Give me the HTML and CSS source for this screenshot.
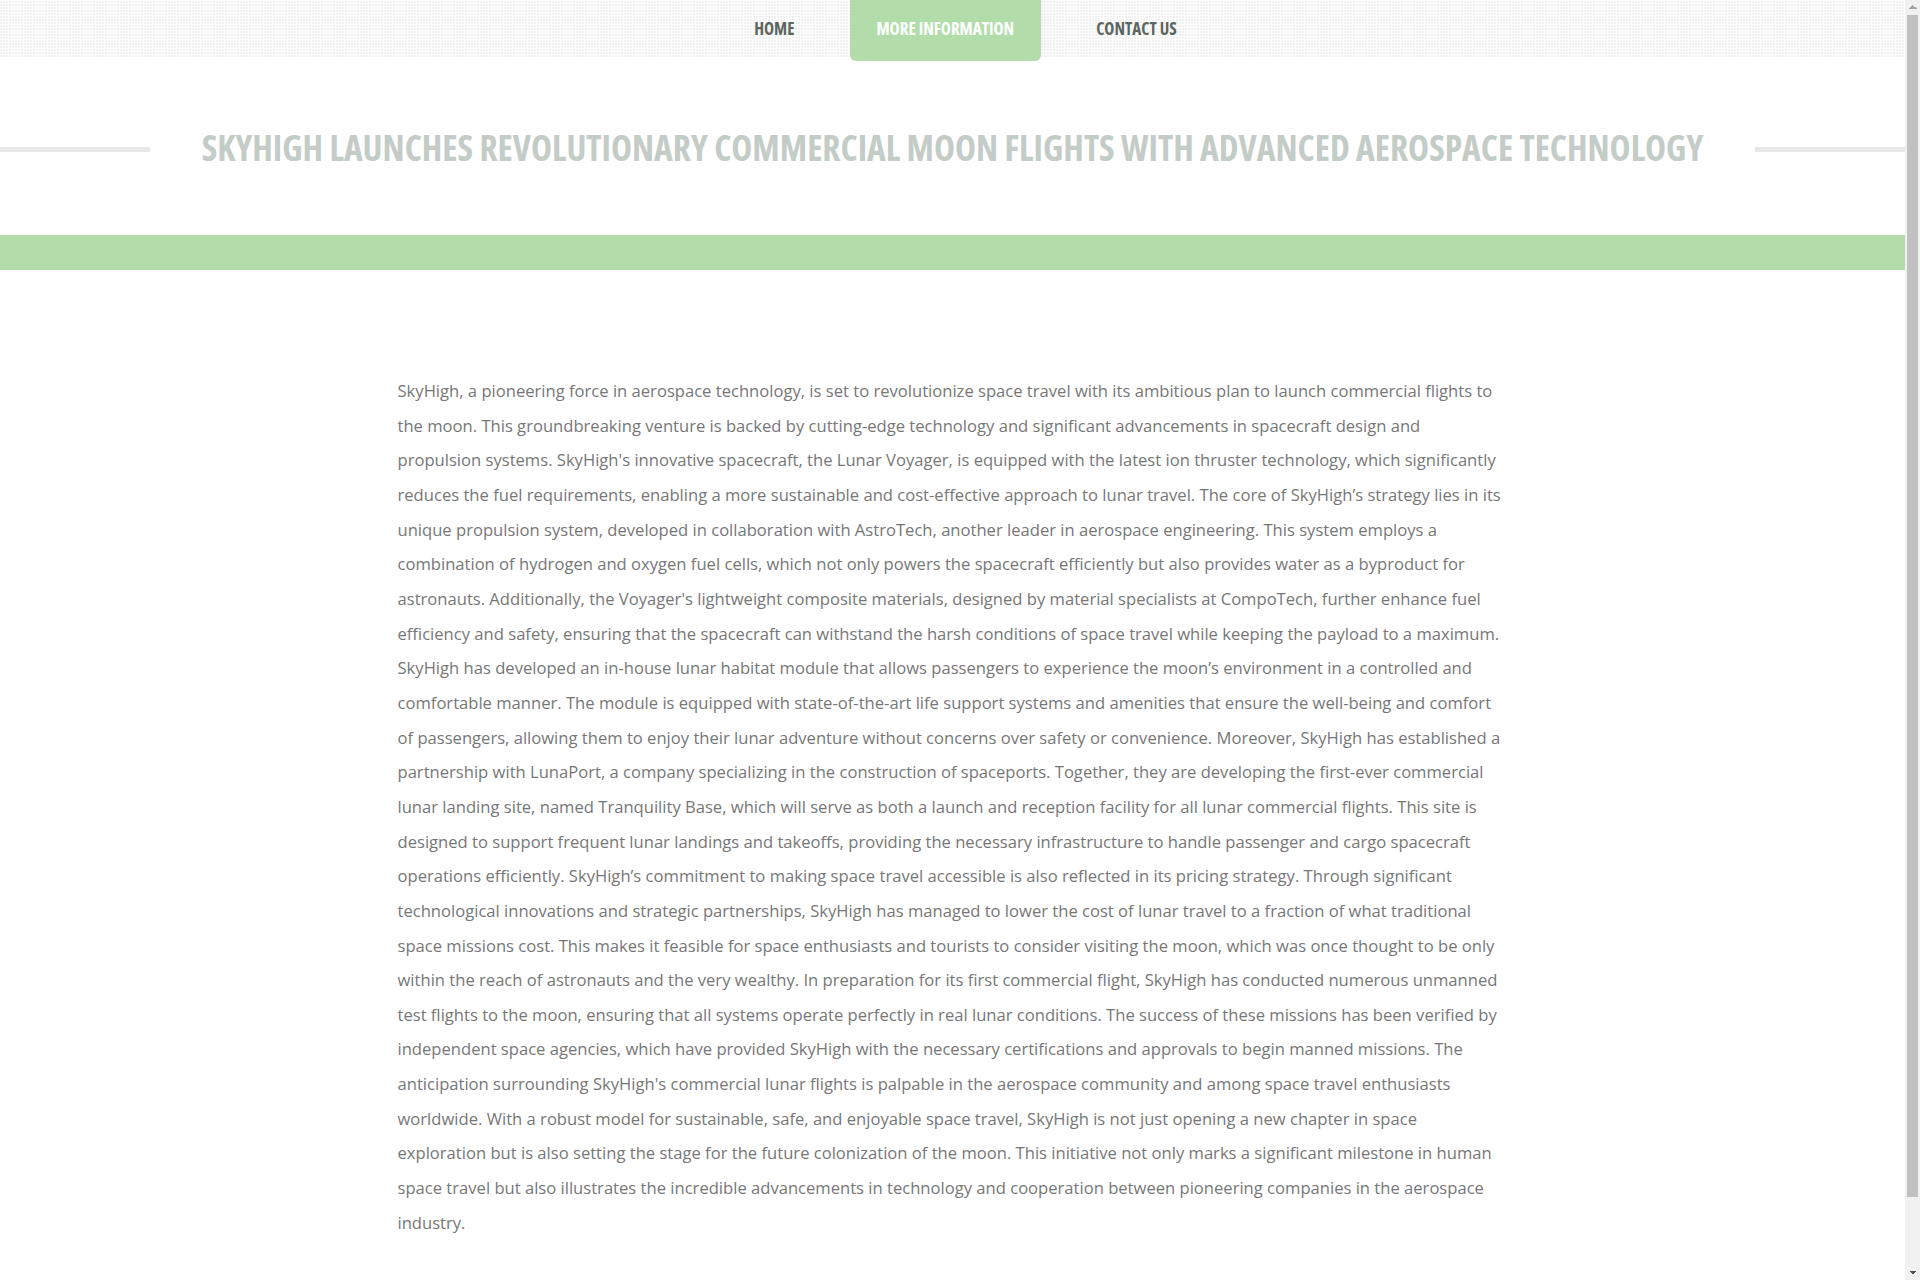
FILE: index.html
```html
<!DOCTYPE html>
<html lang="en">
<head>
<meta charset="utf-8">
<title>SkyHigh</title>
<link rel="stylesheet" href="styles.css">
</head>
<body>
<header class="topbar">
  <nav class="menu">
    <a class="menu-item" href="#">HOME</a>
    <a class="menu-item active" href="#">MORE INFORMATION</a>
    <a class="menu-item" href="#">CONTACT US</a>
  </nav>
</header>
<section class="headline">
  <span class="rule"></span>
  <h1 class="title">SKYHIGH LAUNCHES REVOLUTIONARY COMMERCIAL MOON FLIGHTS WITH ADVANCED AEROSPACE TECHNOLOGY</h1>
  <span class="rule"></span>
</section>
<div class="band"></div>
<main class="container">
  <p class="article">SkyHigh, a pioneering force in aerospace technology, is set to revolutionize space travel with its ambitious plan to launch commercial flights to the moon. This groundbreaking venture is backed by cutting-edge technology and significant advancements in spacecraft design and propulsion systems. SkyHigh's innovative spacecraft, the Lunar Voyager, is equipped with the latest ion thruster technology, which significantly reduces the fuel requirements, enabling a more sustainable and cost-effective approach to lunar travel. The core of SkyHigh’s strategy lies in its unique propulsion system, developed in collaboration with AstroTech, another leader in aerospace engineering. This system employs a combination of hydrogen and oxygen fuel cells, which not only powers the spacecraft efficiently but also provides water as a byproduct for astronauts. Additionally, the Voyager's lightweight composite materials, designed by material specialists at CompoTech, further enhance fuel efficiency and safety, ensuring that the spacecraft can withstand the harsh conditions of space travel while keeping the payload to a maximum. SkyHigh has developed an in-house lunar habitat module that allows passengers to experience the moon’s environment in a controlled and comfortable manner. The module is equipped with state-of-the-art life support systems and amenities that ensure the well-being and comfort of passengers, allowing them to enjoy their lunar adventure without concerns over safety or convenience. Moreover, SkyHigh has established a partnership with LunaPort, a company specializing in the construction of spaceports. Together, they are developing the first-ever commercial lunar landing site, named Tranquility Base, which will serve as both a launch and reception facility for all lunar commercial flights. This site is designed to support frequent lunar landings and takeoffs, providing the necessary infrastructure to handle passenger and cargo spacecraft operations efficiently. SkyHigh’s commitment to making space travel accessible is also reflected in its pricing strategy. Through significant technological innovations and strategic partnerships, SkyHigh has managed to lower the cost of lunar travel to a fraction of what traditional space missions cost. This makes it feasible for space enthusiasts and tourists to consider visiting the moon, which was once thought to be only within the reach of astronauts and the very wealthy. In preparation for its first commercial flight, SkyHigh has conducted numerous unmanned test flights to the moon, ensuring that all systems operate perfectly in real lunar conditions. The success of these missions has been verified by independent space agencies, which have provided SkyHigh with the necessary certifications and approvals to begin manned missions. The anticipation surrounding SkyHigh's commercial lunar flights is palpable in the aerospace community and among space travel enthusiasts worldwide. With a robust model for sustainable, safe, and enjoyable space travel, SkyHigh is not just opening a new chapter in space exploration but is also setting the stage for the future colonization of the moon. This initiative not only marks a significant milestone in human space travel but also illustrates the incredible advancements in technology and cooperation between pioneering companies in the aerospace industry.</p>
</main>
<div class="scrollbar" aria-hidden="true">
  <span class="sb-btn sb-up"></span>
  <span class="sb-track"><span class="sb-thumb"></span></span>
  <span class="sb-btn sb-down"></span>
</div>
</body>
</html>
```

FILE: styles.css
```css
html, body {
  padding: 0;
  background: #ffffff;
}

html {
  margin: 0;
}

body {
  margin: 0 15px 0 0;
  font-family: "Open Sans", "Liberation Sans", sans-serif;
  color: #777777;
}

.topbar {
  height: 57px;
  background-color: #f0f0f0;
  background-image:
    linear-gradient(90deg, transparent 2px, #ffffff 2px),
    linear-gradient(0deg, transparent 2px, #ffffff 2px);
  background-size: 3px 3px;
}

.menu {
  display: flex;
  justify-content: center;
  align-items: flex-start;
  gap: 29px;
  padding-left: 26px;
  height: 57px;
}

.menu-item {
  display: flex;
  align-items: center;
  height: 57px;
  padding: 0 26.5px;
  font-family: "Open Sans", sans-serif;
  font-stretch: 75%;
  font-weight: 700;
  font-size: 17px;
  color: #5d6561;
  text-decoration: none;
  box-sizing: border-box;
}

.menu-item.active {
  height: 61px;
  padding-bottom: 4px;
  background: #b2ddab;
  color: #ffffff;
  border-radius: 0 0 6px 6px;
}

.headline {
  display: flex;
  align-items: center;
  gap: 52px;
  margin-top: 57px;
  height: 70px;
}

.rule {
  flex: 1;
  height: 5px;
  background: #e8e8e8;
}

.title {
  margin: 0;
  padding-bottom: 5px;
  font-family: "Open Sans", sans-serif;
  font-stretch: 75%;
  font-weight: 700;
  font-size: 35.5px;
  line-height: 44px;
  color: #c3ccc6;
  white-space: nowrap;
}

.band {
  margin-top: 51px;
  height: 35px;
  background: #b2ddab;
}

.container {
  width: 1110px;
  margin: 0 auto;
  padding: 104px 15px 117px;
}

.article {
  margin: 0;
  font-size: 16.6px;
  line-height: 34.65px;
  color: #777777;
}

/* browser-style scrollbar shown at the right edge */
.scrollbar {
  position: fixed;
  top: 0;
  right: 0;
  width: 15px;
  height: 100vh;
  display: flex;
  flex-direction: column;
  background: #f1f1f1;
}

.sb-btn {
  display: block;
  height: 15px;
  flex: none;
  background-repeat: no-repeat;
}

.sb-up {
  background-image:
    linear-gradient(to top left, #a3a3a3 50%, transparent 50%),
    linear-gradient(to top right, #a3a3a3 50%, transparent 50%);
  background-size: 4px 4px, 4px 4px;
  background-position: 4px 5px, 8px 5px;
}

.sb-down {
  background-image:
    linear-gradient(to bottom left, #505050 50%, transparent 50%),
    linear-gradient(to bottom right, #505050 50%, transparent 50%);
  background-size: 4px 4px, 4px 4px;
  background-position: 4px 6px, 8px 6px;
}

.sb-track {
  display: block;
  flex: 1;
  padding: 0 2px;
}

.sb-thumb {
  display: block;
  height: 1182px;
  background: #c1c1c1;
}
```
